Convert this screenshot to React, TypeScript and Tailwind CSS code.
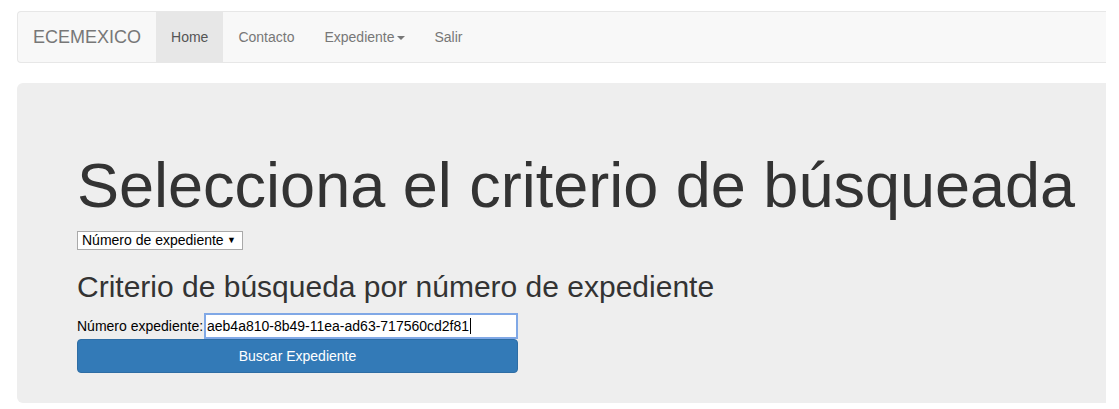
export default function App() {
  const navLinks = ['Contacto', 'Expediente', 'Salir']

  return (
    <div className="min-h-[409px] bg-white pt-[11px] font-['Liberation_Sans',Arial,sans-serif] text-[14px] text-[#333]">
      <div className="ml-[17px] w-[1089px]">
        <nav className="mb-5 flex h-[52px] items-stretch rounded-l-[4px] border border-r-0 border-[#e7e7e7] bg-[#f8f8f8]">
          <a className="flex items-center px-[15px] text-[18px] text-[#777]">ECEMEXICO</a>
          <a className="flex items-center bg-[#e7e7e7] px-[15px] text-[#555]">Home</a>
          {navLinks.map(link => (
            <a key={link} className="flex items-center px-[15px] text-[#777]">
              {link}
              {link === 'Expediente' && (
                <span className="ml-[2px] mt-[1px] inline-block h-0 w-0 border-l-[4px] border-r-[4px] border-t-[4px] border-l-transparent border-r-transparent border-t-[#777]" />
              )}
            </a>
          ))}
        </nav>

        <div className="h-[320px] overflow-hidden rounded-l-[6px] bg-[#eee] px-[60px] pt-[48px]">
          <h1 className="mb-[10px] mt-5 whitespace-nowrap text-[63px] leading-[1.1] text-[#333]">
            Selecciona el criterio de búsqueada
          </h1>
          <div className="h-5">
            <div className="inline-flex h-[19px] w-[166px] items-center justify-between border border-[#a9a9a9] bg-white pl-[4px] pr-[6px] text-[14px] text-black">
              <span>Número de expediente</span>
              <span className="text-[9px]">▼</span>
            </div>
          </div>
          <h2 className="mb-[10px] mt-5 text-[30px] leading-[1.1] text-[#333]">
            Criterio de búsqueda por número de expediente
          </h2>
          <div className="w-[441px]">
            <div className="flex items-center justify-between text-[14px]">
              <label className="text-black">Número expediente:</label>
              <div className="flex h-[26px] w-[314px] items-center border-2 border-[#80a8e6] bg-white px-[1px] text-black">
                aeb4a810-8b49-11ea-ad63-717560cd2f81
                <span className="ml-[1px] inline-block h-[16px] w-px bg-black" />
              </div>
            </div>
            <button className="block h-[34px] w-full rounded-[4px] border border-[#2e6da4] bg-[#337ab7] text-[14px] text-white">
              Buscar Expediente
            </button>
          </div>
        </div>
      </div>
    </div>
  )
}
